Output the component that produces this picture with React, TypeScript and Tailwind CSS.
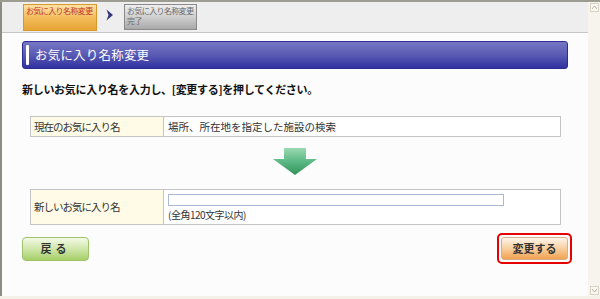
const font = "font-['Noto_Sans_CJK_JP','Noto_Sans',sans-serif]";

const StepBar = () => (
  <div className="h-[31px] bg-[#eeeeee] border-b border-[#c6c6c6] flex items-start pt-[2px] pl-[21px]">
    <div className="w-[74px] h-[27px] border border-[#d8982c] bg-gradient-to-b from-[#fde2a4] via-[#f3bd5c] to-[#e6a433] px-[2px] pt-[1px] text-[8px] leading-[9px] text-[#c0342a] tracking-[-0.6px] whitespace-nowrap">
      お気に入り名称変更
    </div>
    <svg className="ml-[9px] mt-[5px]" width="8" height="12" viewBox="0 0 8 12">
      <path d="M0.5 0.5 L7 6 L0.5 11.5 L2.5 6 Z" fill="#363677" />
    </svg>
    <div className="ml-[10px] w-[73px] h-[26px] border border-[#8a8a8a] bg-gradient-to-b from-[#eeeeee] via-[#cfcfcf] to-[#a9a9a9] px-[2px] pt-[1px] text-[8px] leading-[10px] text-[#6b6b6b] tracking-[-0.6px] whitespace-nowrap">
      <div>お気に入り名称変更</div>
      <div>完了</div>
    </div>
  </div>
);

const TitleBar = () => (
  <div className="mt-[8px] mr-[10px] h-[28px] rounded-[3px] border border-[#2c2c94] bg-gradient-to-b from-[#7676c4] via-[#5a5ab3] to-[#3131a0] flex items-center pl-[3px]">
    <div className="w-[3px] h-[20px] bg-white rounded-[1px]" />
    <span className="ml-[6px] text-[12.5px] text-white tracking-[0.2px]">お気に入り名称変更</span>
  </div>
);

const DownArrow = () => (
  <div className="flex justify-center mt-[11px] pr-[10px]">
    <svg width="44" height="27" viewBox="0 0 44 27">
      <defs>
        <linearGradient id="ga" x1="0" y1="0" x2="0" y2="1">
          <stop offset="0" stopColor="#9ad9b2" />
          <stop offset="0.5" stopColor="#5cb884" />
          <stop offset="1" stopColor="#2f9458" />
        </linearGradient>
      </defs>
      <path d="M11 0 H33 V11 H44 L22 27 L0 11 H11 Z" fill="url(#ga)" />
    </svg>
  </div>
);

export default function App() {
  return (
    <div className={`w-[600px] h-[299px] overflow-hidden flex flex-col bg-[#f3f1e8] ${font}`}>
      <div className="flex flex-1 min-h-0 border-t-2 border-[#9c9c90]">
        <div className="flex-1 border-l-2 border-[#8c8c84] bg-[#fcfcfc] flex flex-col">
          <StepBar />
          <div className="pl-[20px] pr-[10px] flex flex-col">
            <TitleBar />
            <p className="mt-[14px] text-[11px] leading-[12px] font-bold text-[#111] tracking-[-0.3px]">
              新しいお気に入り名を入力し、[変更する]を押してください。
            </p>
            <div className="mt-[21px] ml-[8px] w-[531px] h-[21px] border border-[#c4c4c4] flex text-[10.5px] text-[#333]">
              <div className="w-[133px] bg-[#fffbe6] border-r border-[#c4c4c4] flex items-center pl-[3px] tracking-[-1px]">
                現在のお気に入り名
              </div>
              <div className="flex-1 bg-white flex items-center pl-[4px]">
                場所、所在地を指定した施設の検索
              </div>
            </div>
            <DownArrow />
            <div className="mt-[14px] ml-[8px] w-[531px] h-[36px] border border-[#c4c4c4] flex text-[10.5px] text-[#333]">
              <div className="w-[133px] bg-[#fffbe6] border-r border-[#c4c4c4] flex items-center pl-[3px] tracking-[-1px]">
                新しいお気に入り名
              </div>
              <div className="flex-1 bg-white pl-[4px] pt-[4px]">
                <div className="w-[336px] h-[12px] border border-[#a9bad2] bg-white" />
                <div className="mt-[3px] text-[10px] leading-[12px] tracking-[-0.5px]">(全角120文字以内)</div>
              </div>
            </div>
            <div className="mt-[8px] flex items-center justify-between pr-[6px]">
              <button className="w-[67px] h-[24px] rounded-[4px] border border-[#9dc466] bg-gradient-to-b from-[#f4fae8] via-[#cfe6a8] to-[#a6cf68] text-[11px] font-bold text-[#333] tracking-[4px] flex items-center justify-center">
                戻る
              </button>
              <div className="p-[2px] border-2 border-[#e60000] rounded-[5px]">
                <button className="w-[67px] h-[23px] rounded-[3px] border border-[#d6b08c] bg-gradient-to-b from-[#fdf4ea] via-[#f8cf9e] to-[#f0a14f] text-[11px] font-bold text-[#333] flex items-center justify-center">
                  変更する
                </button>
              </div>
            </div>
          </div>
        </div>
        <div className="w-[12px] bg-[#f6f4ec] flex flex-col justify-between items-center py-[1px]">
          <div className="w-[9px] h-[9px] border border-[#d8d4c4] bg-[#f8f6ee] flex items-center justify-center">
            <svg width="5" height="3" viewBox="0 0 5 3"><path d="M0 3 L2.5 0 L5 3" fill="none" stroke="#b8b4a4" /></svg>
          </div>
          <div className="w-[9px] h-[9px] border border-[#d8d4c4] bg-[#f8f6ee] flex items-center justify-center">
            <svg width="5" height="3" viewBox="0 0 5 3"><path d="M0 0 L2.5 3 L5 0" fill="none" stroke="#b8b4a4" /></svg>
          </div>
        </div>
      </div>
      <div className="h-[3px] bg-[#f3f1e8]" />
    </div>
  );
}
